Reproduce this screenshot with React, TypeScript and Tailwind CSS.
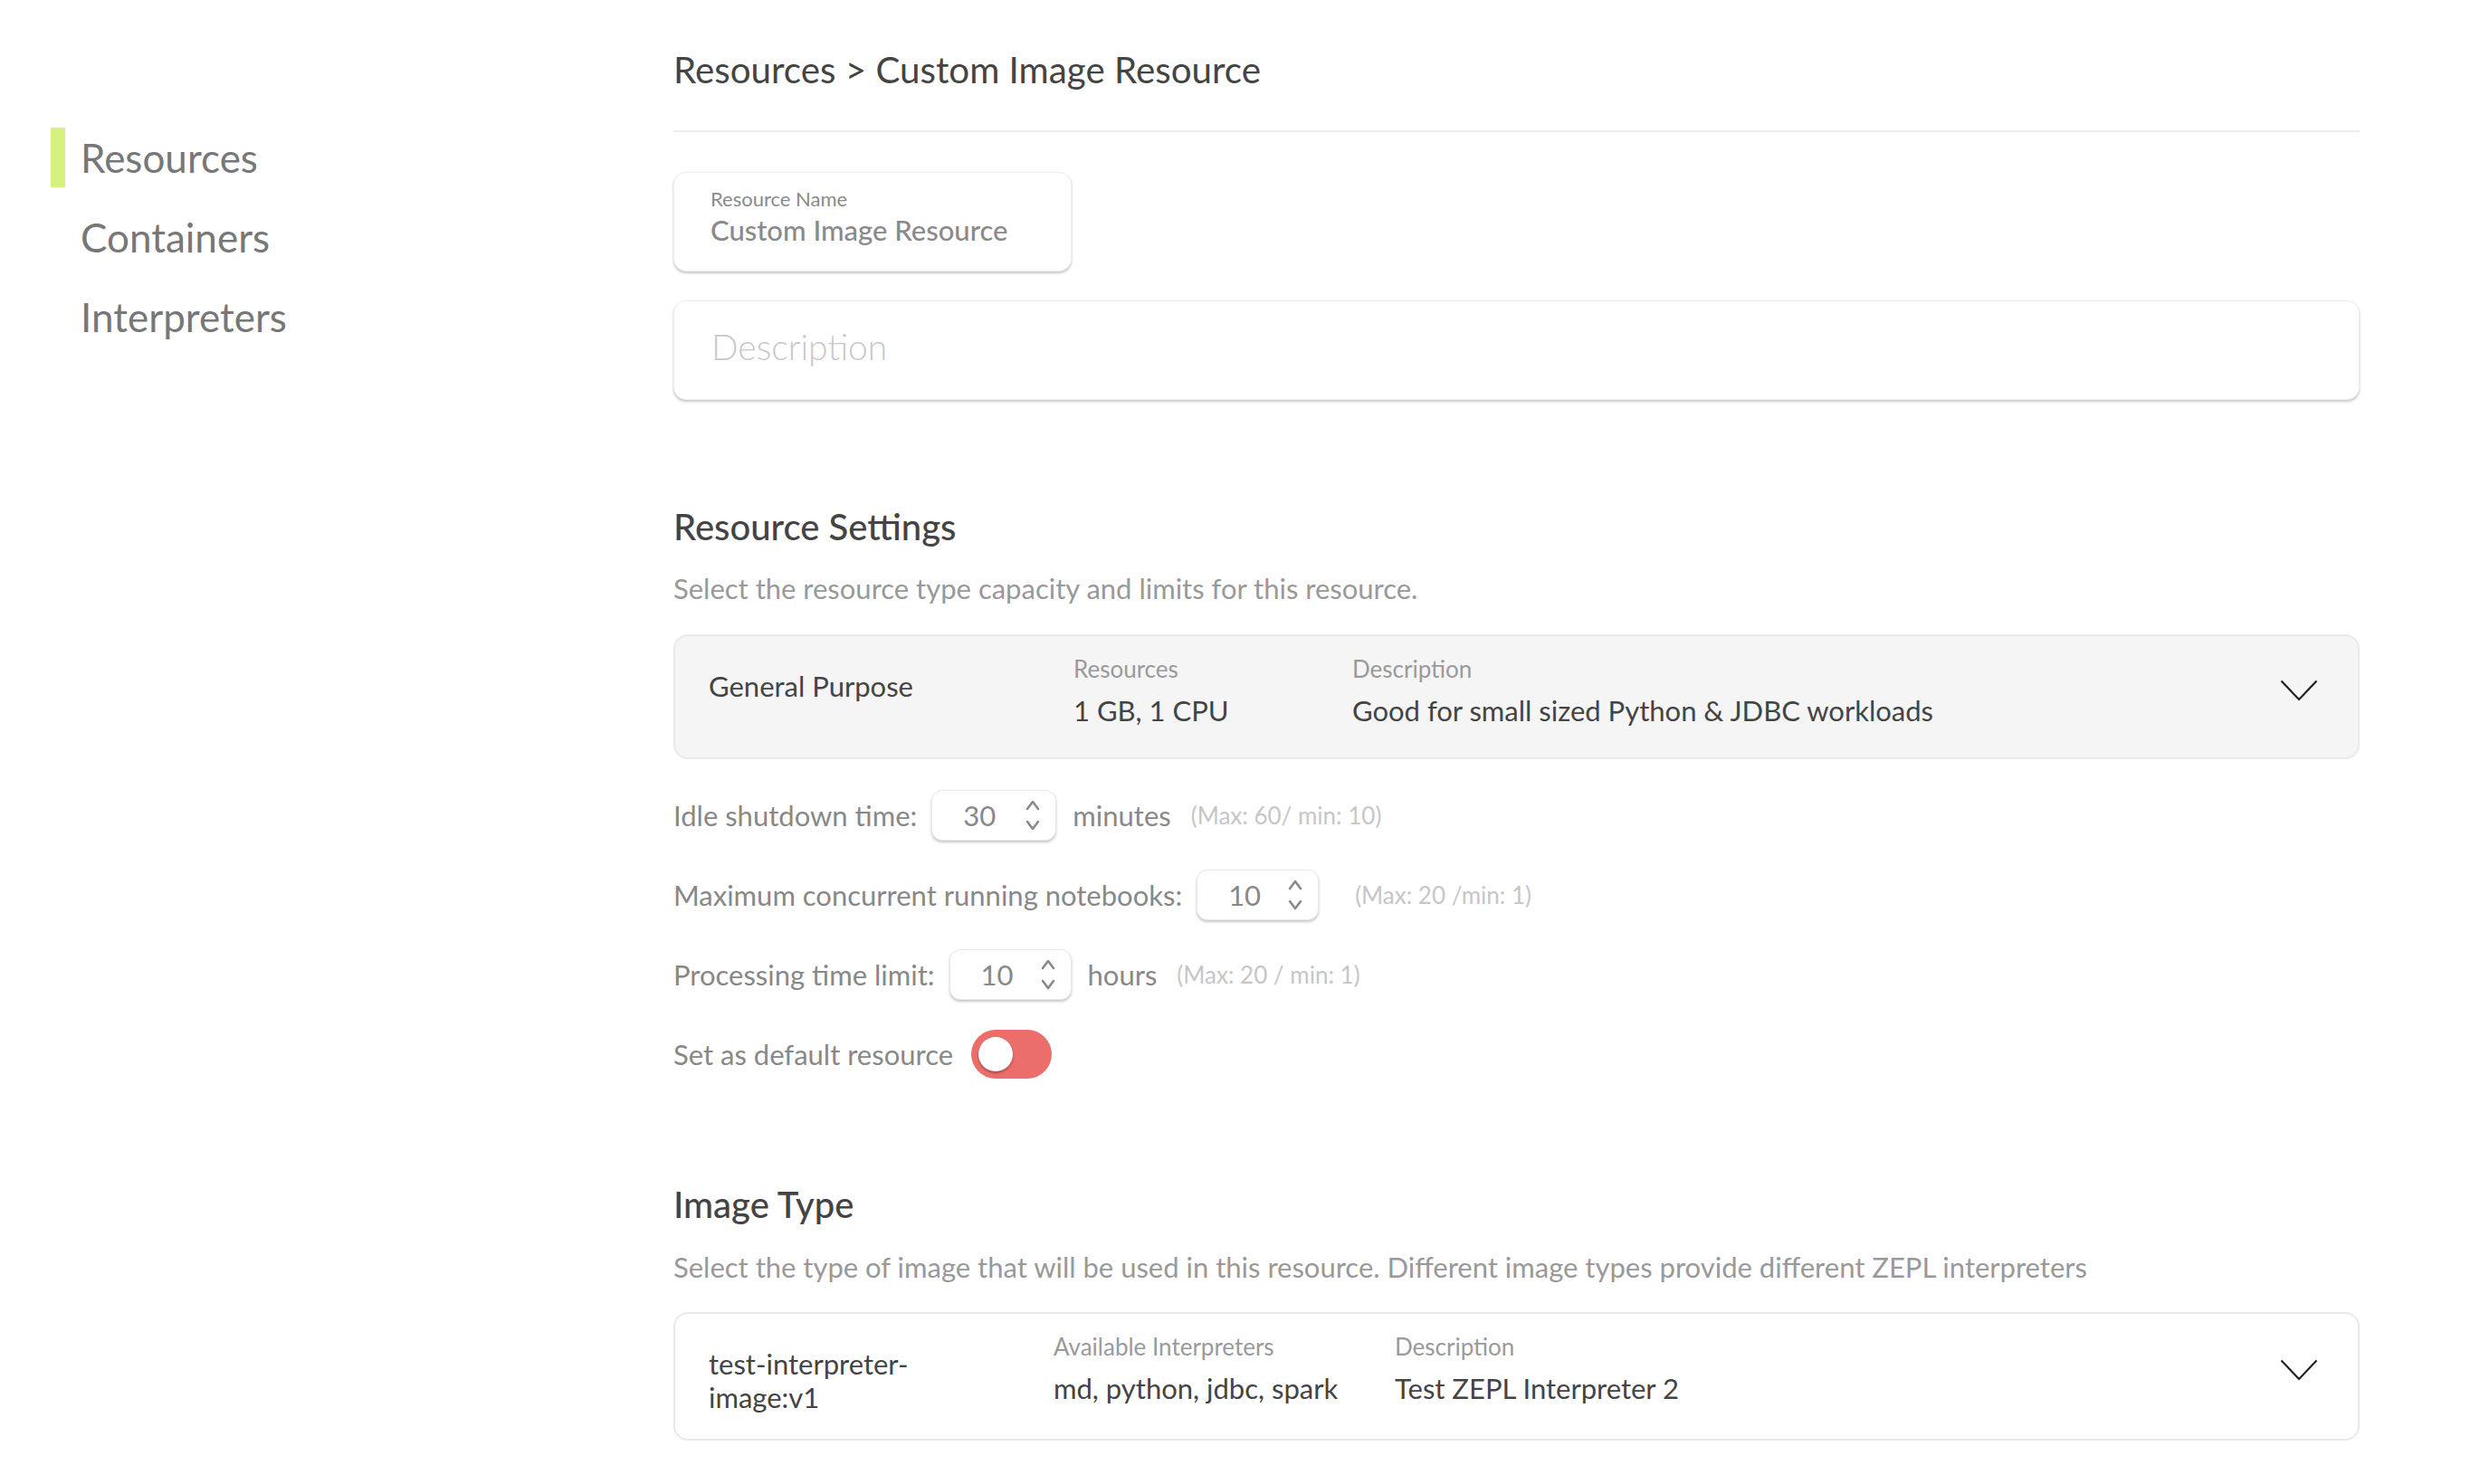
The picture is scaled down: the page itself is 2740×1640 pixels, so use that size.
import React from "react";

function Chevron() {
  return (
    <svg width="42" height="24" viewBox="0 0 42 24" fill="none">
      <polyline points="1.5,1.5 21,22 40.5,1.5" stroke="#1f1f1f" strokeWidth="2.2" strokeLinejoin="miter" />
    </svg>
  );
}

function Arrows() {
  return (
    <svg width="16" height="36" viewBox="0 0 16 36" fill="none">
      <polyline points="2,11 8,3 14,11" stroke="#8a8a8a" strokeWidth="2.6" strokeLinecap="round" strokeLinejoin="round" />
      <polyline points="2,25 8,33 14,25" stroke="#8a8a8a" strokeWidth="2.6" strokeLinecap="round" strokeLinejoin="round" />
    </svg>
  );
}

function Spinner({ value, width }: { value: string; width: string }) {
  return (
    <div
      className={`ml-[16px] ${width} h-[56px] rounded-[12px] border border-[#e8e8e8] bg-white shadow-[0_2px_3px_rgba(0,0,0,0.22)] flex items-center justify-between pl-[34px] pr-[17px] text-[31px] text-[#888]`}
    >
      <span className="leading-[38px]">{value}</span>
      <Arrows />
    </div>
  );
}

function SideItem({ label, active }: { label: string; active?: boolean }) {
  return (
    <div className="flex h-[66px] items-stretch">
      <div className={`w-[16px] ${active ? "bg-[#d6f27e]" : "bg-transparent"}`} />
      <span className="pl-[17px] text-[44px] leading-[66px] text-[#777777]">{label}</span>
    </div>
  );
}

export default function App() {
  return (
    <div className="min-h-screen w-full bg-white flex font-['Lato','Noto_Sans',sans-serif]">
      <aside className="w-[744px] shrink-0 pt-[141px] pl-[56px]">
        <nav className="flex flex-col gap-[22px]">
          <SideItem label="Resources" active />
          <SideItem label="Containers" />
          <SideItem label="Interpreters" />
        </nav>
      </aside>

      <main className="w-[1863px] shrink-0 flex flex-col pb-[40px]">
        <div className="pt-[53px] pb-[43px] border-b-2 border-[#eeeeee] text-[40.3px] leading-[48px] text-[#444444]">
          Resources &gt; Custom Image Resource
        </div>

        <div className="mt-[44px] w-[440px] h-[110px] rounded-[14px] border border-[#eeeeee] bg-white shadow-[0_2px_3px_rgba(0,0,0,0.22)] pl-[40px] pt-[16px]">
          <div className="text-[22px] leading-[25px] text-[#8a8a8a]">Resource Name</div>
          <div className="mt-[4px] text-[31px] leading-[36px] font-medium text-[#8a8a8a]">Custom Image Resource</div>
        </div>

        <div className="mt-[32px] h-[110px] rounded-[14px] border border-[#eeeeee] bg-white shadow-[0_2px_3px_rgba(0,0,0,0.22)] pl-[41px] pt-[26px] text-[39px] leading-[48px] font-light text-[#c8c8c8]">
          Description
        </div>

        <h2 className="mt-[116px] text-[40px] leading-[48px] font-medium text-[#444444]">Resource Settings</h2>
        <p className="mt-[25px] text-[31px] leading-[38px] text-[#999999]">
          Select the resource type capacity and limits for this resource.
        </p>

        <div className="mt-[32px] h-[138px] rounded-[16px] border-2 border-[#e9e9e9] bg-[#f5f5f5] flex items-start pl-[37px] pr-[44px] pt-[20px]">
          <div className="w-[403px] shrink-0 pt-[16px] text-[31px] leading-[38px] text-[#444444]">General Purpose</div>
          <div className="w-[308px] shrink-0">
            <div className="text-[26px] leading-[32px] text-[#9a9a9a]">Resources</div>
            <div className="mt-[11px] text-[31px] leading-[38px] text-[#444444]">1 GB, 1 CPU</div>
          </div>
          <div className="flex-1">
            <div className="text-[26px] leading-[32px] text-[#9a9a9a]">Description</div>
            <div className="mt-[11px] text-[31px] leading-[38px] text-[#444444]">
              Good for small sized Python &amp; JDBC workloads
            </div>
          </div>
          <div className="mt-[28px] shrink-0">
            <Chevron />
          </div>
        </div>

        <div className="mt-[34px] flex flex-col gap-[32px] text-[31px] text-[#888888]">
          <div className="flex items-center h-[56px]">
            <span className="leading-[38px]">Idle shutdown time:</span>
            <Spinner value="30" width="w-[138px]" />
            <span className="ml-[18px] leading-[38px]">minutes</span>
            <span className="ml-[22px] text-[26px] leading-[32px] text-[#c6c6c6]">(Max: 60/ min: 10)</span>
          </div>
          <div className="flex items-center h-[56px]">
            <span className="leading-[38px]">Maximum concurrent running notebooks:</span>
            <Spinner value="10" width="w-[135px]" />
            <span className="ml-[40px] text-[26px] leading-[32px] text-[#c6c6c6]">(Max: 20 /min: 1)</span>
          </div>
          <div className="flex items-center h-[56px]">
            <span className="leading-[38px]">Processing time limit:</span>
            <Spinner value="10" width="w-[135px]" />
            <span className="ml-[18px] leading-[38px]">hours</span>
            <span className="ml-[22px] text-[26px] leading-[32px] text-[#c6c6c6]">(Max: 20 / min: 1)</span>
          </div>
          <div className="flex items-center h-[56px]">
            <span className="leading-[38px]">Set as default resource</span>
            <div className="ml-[20px] w-[89px] h-[54px] rounded-full bg-[#ec6e6b] flex items-center pl-[8px]">
              <div className="w-[38px] h-[38px] rounded-full bg-white shadow-[0_2px_3px_rgba(0,0,0,0.3)]" />
            </div>
          </div>
        </div>

        <h2 className="mt-[114px] text-[40px] leading-[48px] font-medium text-[#444444]">Image Type</h2>
        <p className="mt-[26px] text-[31px] leading-[38px] text-[#999999]">
          Select the type of image that will be used in this resource. Different image types provide different ZEPL interpreters
        </p>

        <div className="mt-[31px] h-[142px] rounded-[16px] border-2 border-[#e9e9e9] bg-white flex items-start pl-[37px] pr-[44px] pt-[20px]">
          <div className="w-[381px] shrink-0 pt-[17px]">
            <div className="w-[240px] text-[31px] leading-[37px] text-[#444444]">test-interpreter-image:v1</div>
          </div>
          <div className="w-[377px] shrink-0">
            <div className="text-[26px] leading-[32px] text-[#9a9a9a]">Available Interpreters</div>
            <div className="mt-[11px] text-[31px] leading-[38px] text-[#444444]">md, python, jdbc, spark</div>
          </div>
          <div className="flex-1">
            <div className="text-[26px] leading-[32px] text-[#9a9a9a]">Description</div>
            <div className="mt-[11px] text-[31px] leading-[38px] text-[#444444]">Test ZEPL Interpreter 2</div>
          </div>
          <div className="mt-[30px] shrink-0">
            <Chevron />
          </div>
        </div>
      </main>
    </div>
  );
}
